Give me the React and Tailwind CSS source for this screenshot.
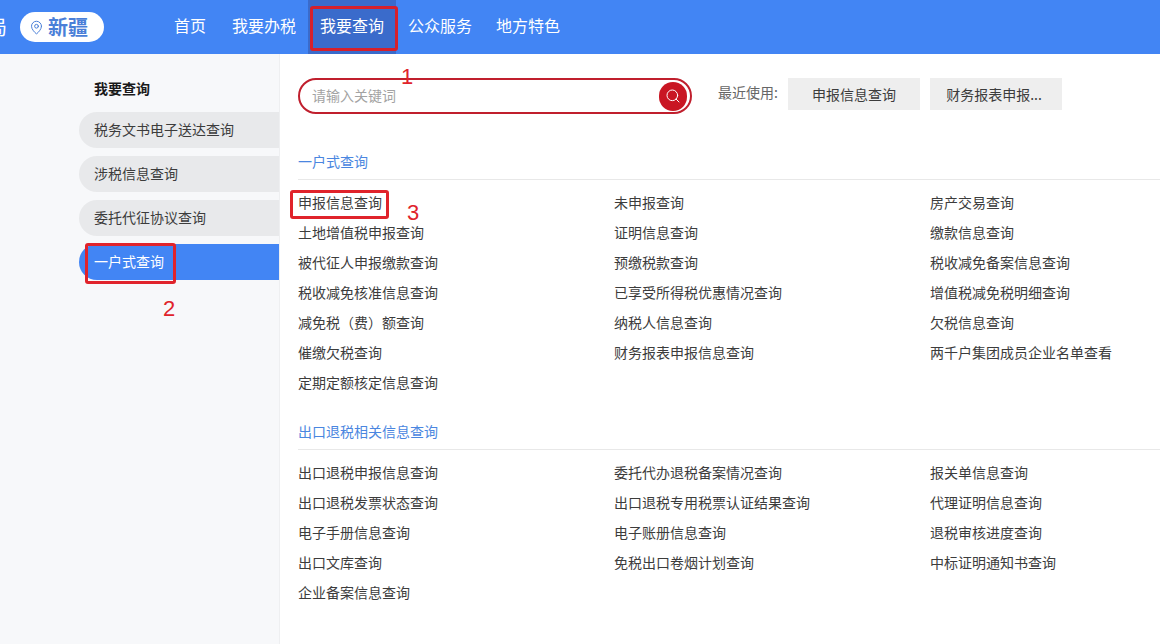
import React from "react";
import { MapPin, Search } from "lucide-react";

const navItems = [
  { label: "首页", cls: "pl-3 pr-[14px]" },
  { label: "我要办税", cls: "px-3" },
  { label: "我要查询", cls: "px-3 bg-[#3a6bcb]" },
  { label: "公众服务", cls: "px-3" },
  { label: "地方特色", cls: "px-3" },
];

const sideItems = ["税务文书电子送达查询", "涉税信息查询", "委托代征协议查询"];

const section1 = [
  "申报信息查询", "未申报查询", "房产交易查询",
  "土地增值税申报查询", "证明信息查询", "缴款信息查询",
  "被代征人申报缴款查询", "预缴税款查询", "税收减免备案信息查询",
  "税收减免核准信息查询", "已享受所得税优惠情况查询", "增值税减免税明细查询",
  "减免税（费）额查询", "纳税人信息查询", "欠税信息查询",
  "催缴欠税查询", "财务报表申报信息查询", "两千户集团成员企业名单查看",
  "定期定额核定信息查询",
];

const section2 = [
  "出口退税申报信息查询", "委托代办退税备案情况查询", "报关单信息查询",
  "出口退税发票状态查询", "出口退税专用税票认证结果查询", "代理证明信息查询",
  "电子手册信息查询", "电子账册信息查询", "退税审核进度查询",
  "出口文库查询", "免税出口卷烟计划查询", "中标证明通知书查询",
  "企业备案信息查询",
];

const Section = ({ title, items }) => (
  <section>
    <h3 className="h-[36px] border-b border-[#e8e8e8] text-[14px] leading-[34px] font-normal text-[#4a86e0]">
      {title}
    </h3>
    <ul className="grid grid-cols-[316px_316px_1fr] pt-[7px]">
      {items.map((item) => (
        <li key={item} className="h-[30px] whitespace-nowrap text-[14px] leading-[30px] text-[#3c3c3c]">
          {item}
        </li>
      ))}
    </ul>
  </section>
);

const App = () => {
  return (
    <div className="relative h-[644px] w-[1160px] overflow-hidden bg-white font-['Noto_Sans_CJK_SC','Noto_Sans',sans-serif]">
      <header className="flex h-[54px] items-center overflow-hidden bg-[#4285f4] text-white">
        <span className="-ml-[13px] w-[33px] text-[20px] leading-none">局</span>
        <div className="flex h-[30px] w-[84px] items-center justify-start gap-1 rounded-full bg-white pl-[9px] text-[#4a7fd8]">
          <MapPin size={15} strokeWidth={1.6} />
          <span className="text-[20px] font-bold leading-none">新疆</span>
        </div>
        <nav className="ml-[58px] flex h-full">
          {navItems.map((item) => (
            <a key={item.label} className={`flex h-full items-center pb-[5px] text-[16px] ${item.cls}`}>
              {item.label}
            </a>
          ))}
        </nav>
      </header>

      <div className="flex h-[590px]">
        <aside className="w-[280px] shrink-0 border-r border-[#eeeff1] bg-[#f7f8fa] pl-[79px]">
          <p className="h-[58px] pl-[15px] text-[14px] font-bold leading-[69px] text-[#1a1a1a]">我要查询</p>
          <ul className="flex flex-col gap-2">
            {sideItems.map((item) => (
              <li key={item} className="h-9 rounded-l-full bg-[#e8e9eb] pl-[15px] text-[14px] leading-[35px] text-[#3c3c3c]">
                {item}
              </li>
            ))}
            <li className="h-9 rounded-l-full bg-[#4285f4] pl-[15px] text-[14px] leading-[35px] text-white">一户式查询</li>
          </ul>
        </aside>

        <main className="min-w-0 flex-1 pl-[18px]">
          <div className="flex items-start pt-6">
            <div className="flex h-[36px] w-[394px] items-center justify-between rounded-full border-2 border-[#c01f2d] pr-[3px] pl-3">
              <span className="pb-[2px] text-[14px] text-[#a3a3a3]">请输入关键词</span>
              <span className="flex h-[29px] w-[28px] items-center justify-center rounded-full bg-[#c91623] text-white">
                <Search size={16} strokeWidth={1.5} />
              </span>
            </div>
            <span className="ml-[26px] w-[70px] text-[14px] leading-[28px] text-[#666666]">最近使用:</span>
            <button className="h-8 w-[132px] bg-[#eeeeee] text-[14px] text-[#3c3c3c]">申报信息查询</button>
            <button className="ml-[10px] h-8 w-[132px] bg-[#eeeeee] pr-1 text-[14px] text-[#3c3c3c]">财务报表申报...</button>
          </div>

          <div className="mt-[30px] flex flex-col gap-[17px]">
            <Section title="一户式查询" items={section1} />
            <Section title="出口退税相关信息查询" items={section2} />
          </div>
        </main>
      </div>

      {/* red annotations sitting on top of the page */}
      <div className="absolute top-[6px] left-[310px] h-[45px] w-[88px] rounded-[3px] border-[3px] border-[#d6202b]" />
      <div className="absolute top-[243px] left-[85px] h-[41px] w-[91px] rounded-[3px] border-[3px] border-[#e0232b]" />
      <div className="absolute top-[190px] left-[290px] h-[29px] w-[99px] rounded-[3px] border-[3px] border-[#e0232b]" />
      <span className="absolute top-[64px] left-[401px] font-['Liberation_Sans',sans-serif] text-[22px] leading-[26px] text-[#e0232b]">1</span>
      <span className="absolute top-[296px] left-[163px] font-['Liberation_Sans',sans-serif] text-[22px] leading-[26px] text-[#e0232b]">2</span>
      <span className="absolute top-[200px] left-[407px] font-['Liberation_Sans',sans-serif] text-[22px] leading-[26px] text-[#e0232b]">3</span>
    </div>
  );
};

export default App;
